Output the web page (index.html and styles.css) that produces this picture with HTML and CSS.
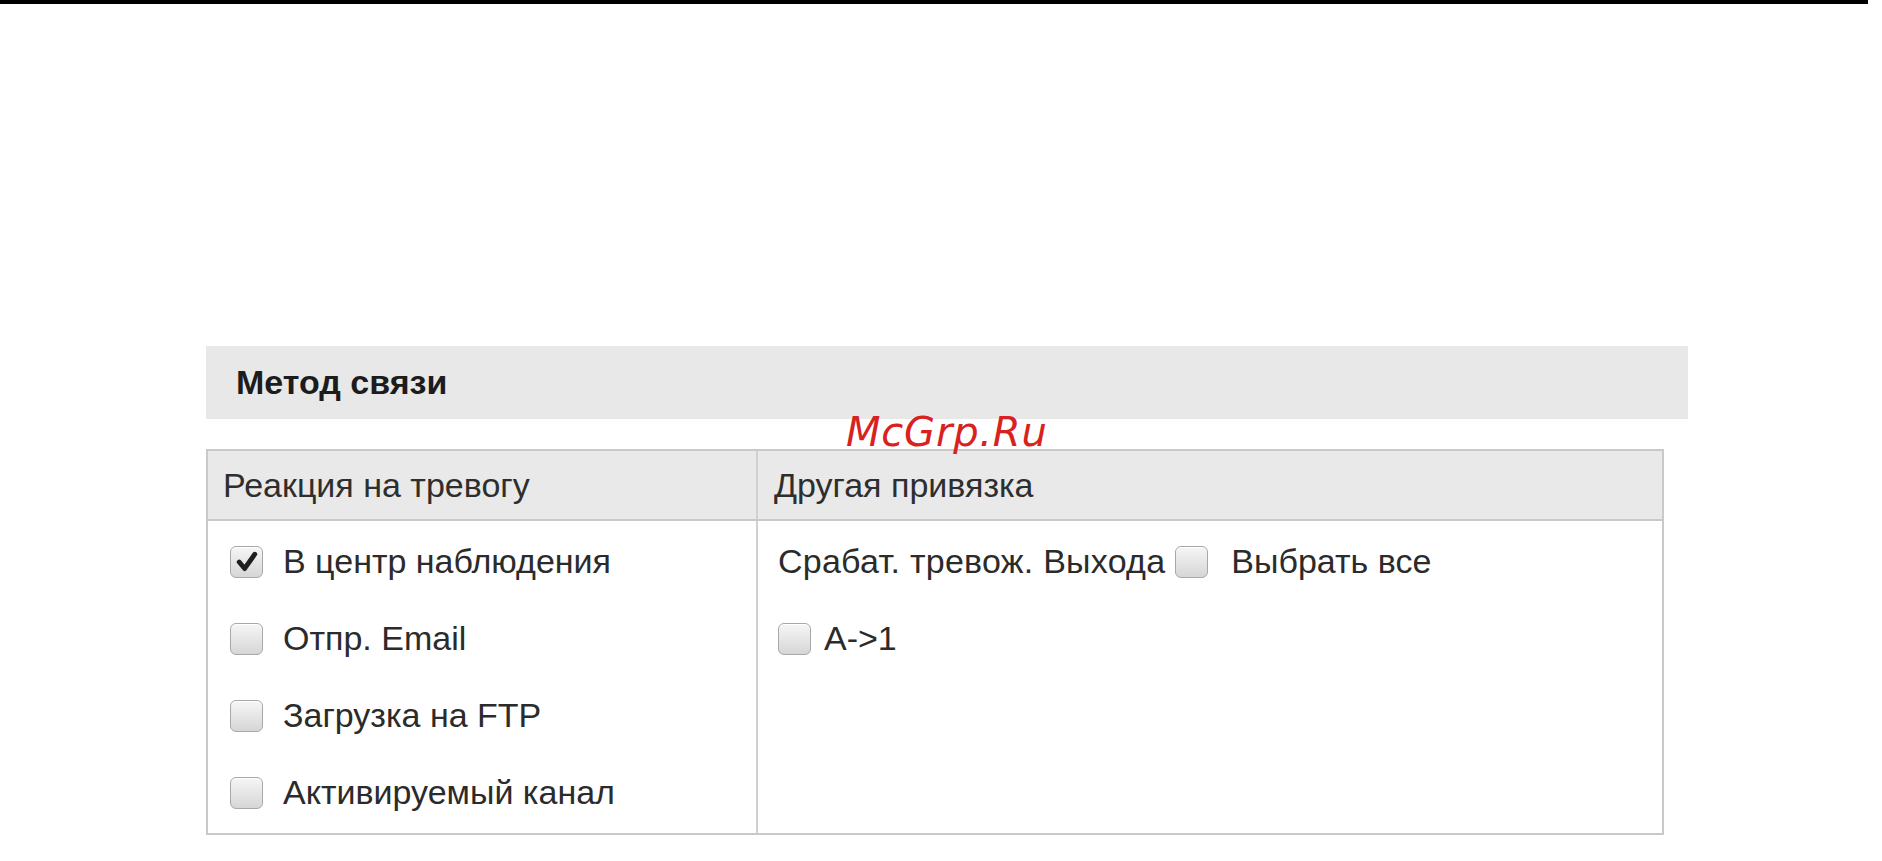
FILE: index.html
```html
<!DOCTYPE html>
<html lang="ru">
<head>
<meta charset="utf-8">
<title>Метод связи</title>
<link rel="stylesheet" href="styles.css">
</head>
<body>
<div class="topbar"></div>
<div class="page">
  <div class="section-title">Метод связи</div>
  <div class="watermark">McGrp.Ru</div>
  <div class="panel">
    <div class="head head-left">Реакция на тревогу</div>
    <div class="head head-right">Другая привязка</div>
    <div class="body body-left">
      <label class="item item-left"><span class="cb checked"><svg viewBox="0 0 20 20" width="24" height="24"><path d="M3.5 10 L8 15.5 L16.5 3.5" fill="none" stroke="#1e1e1e" stroke-width="4" stroke-linecap="round" stroke-linejoin="round"/></svg></span><span class="lbl">В центр наблюдения</span></label>
      <label class="item item-left"><span class="cb"></span><span class="lbl">Отпр. Email</span></label>
      <label class="item item-left"><span class="cb"></span><span class="lbl">Загрузка на FTP</span></label>
      <label class="item item-left"><span class="cb"></span><span class="lbl">Активируемый канал</span></label>
    </div>
    <div class="body body-right">
      <div class="item item-right"><span class="lbl lbl-out">Срабат. тревож. Выхода</span><span class="cb cb-after"></span><span class="lbl lbl-all">Выбрать все</span></div>
      <label class="item item-right"><span class="cb"></span><span class="lbl lbl-a">A-&gt;1</span></label>
    </div>
  </div>
</div>
</body>
</html>
```
FILE: styles.css
```css
html, body {
  margin: 0;
  padding: 0;
  background: #ffffff;
}
body {
  font-family: "Liberation Sans", Arial, sans-serif;
  color: #2b2b2b;
}
.topbar {
  height: 4px;
  width: 1868px;
  background: #000000;
}
.page {
  position: relative;
  padding-left: 206px;
  padding-top: 342px;
}
.section-title {
  width: 1482px;
  height: 73px;
  line-height: 73px;
  box-sizing: border-box;
  padding-left: 30px;
  background: #e8e8e8;
  font-size: 34px;
  font-weight: bold;
  color: #1c1c1c;
}
.watermark {
  position: absolute;
  left: 846px;
  top: 405px;
  font-family: "DejaVu Sans", sans-serif;
  font-style: italic;
  font-size: 40px;
  color: #d8221f;
  letter-spacing: 0.8px;
}
.panel {
  margin-top: 30px;
  width: 1458px;
  box-sizing: border-box;
  border: 2px solid #c9c9c9;
  display: grid;
  grid-template-columns: 550px 1fr;
}
.head {
  height: 70px;
  line-height: 68px;
  box-sizing: border-box;
  background: #e9e9e9;
  border-bottom: 2px solid #c9c9c9;
  font-size: 34px;
  color: #2e2e2e;
}
.head-left {
  padding-left: 15px;
  border-right: 2px solid #d0d0d0;
}
.head-right {
  padding-left: 16px;
}
.body {
  padding: 2px 0;
}
.body-left {
  border-right: 2px solid #d0d0d0;
  padding-left: 22px;
}
.body-right {
  padding-left: 20px;
}
.item {
  display: flex;
  align-items: center;
  height: 77px;
  font-size: 34px;
  color: #2b2b2b;
}
.lbl {
  line-height: 77px;
}
.item-left .lbl {
  margin-left: 20px;
}
.lbl-out {
  letter-spacing: 0.25px;
}
.cb {
  flex: none;
  width: 33px;
  height: 32px;
  box-sizing: border-box;
  border: 1px solid #a8a8a8;
  border-radius: 6px;
  background: linear-gradient(#f6f6f6, #d6d6d6);
  box-shadow: inset 0 1px 0 #ffffff;
  display: flex;
  align-items: center;
  justify-content: center;
}
.cb-after {
  margin-left: 10px;
}
.lbl-all {
  margin-left: 23px;
}
.lbl-a {
  margin-left: 13px;
}
```
